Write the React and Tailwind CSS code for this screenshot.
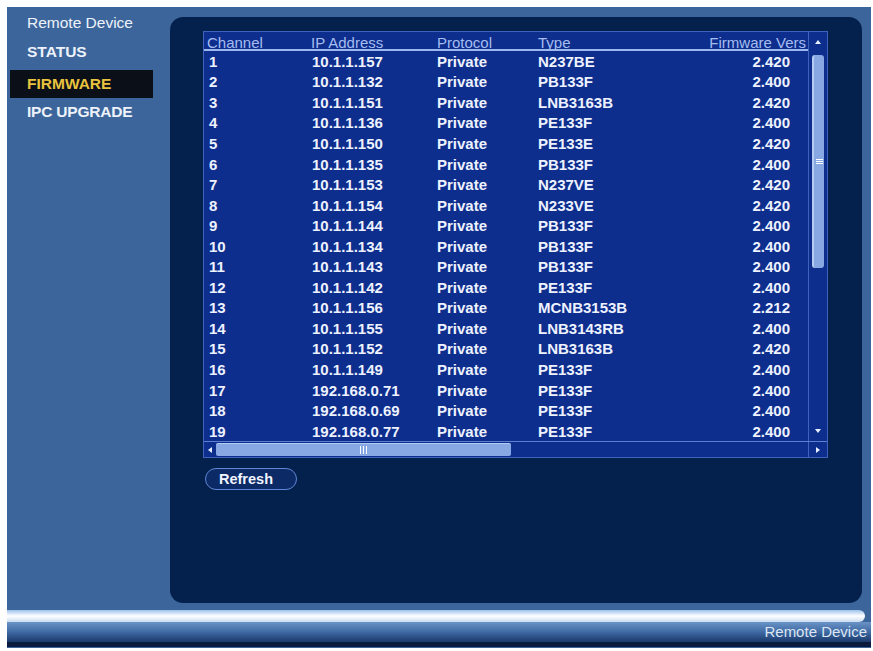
import React from "react";

const rows = [
  ["1", "10.1.1.157", "Private", "N237BE", "2.420"],
  ["2", "10.1.1.132", "Private", "PB133F", "2.400"],
  ["3", "10.1.1.151", "Private", "LNB3163B", "2.420"],
  ["4", "10.1.1.136", "Private", "PE133F", "2.400"],
  ["5", "10.1.1.150", "Private", "PE133E", "2.420"],
  ["6", "10.1.1.135", "Private", "PB133F", "2.400"],
  ["7", "10.1.1.153", "Private", "N237VE", "2.420"],
  ["8", "10.1.1.154", "Private", "N233VE", "2.420"],
  ["9", "10.1.1.144", "Private", "PB133F", "2.400"],
  ["10", "10.1.1.134", "Private", "PB133F", "2.400"],
  ["11", "10.1.1.143", "Private", "PB133F", "2.400"],
  ["12", "10.1.1.142", "Private", "PE133F", "2.400"],
  ["13", "10.1.1.156", "Private", "MCNB3153B", "2.212"],
  ["14", "10.1.1.155", "Private", "LNB3143RB", "2.400"],
  ["15", "10.1.1.152", "Private", "LNB3163B", "2.420"],
  ["16", "10.1.1.149", "Private", "PE133F", "2.400"],
  ["17", "192.168.0.71", "Private", "PE133F", "2.400"],
  ["18", "192.168.0.69", "Private", "PE133F", "2.400"],
  ["19", "192.168.0.77", "Private", "PE133F", "2.400"],
];

const cols = "grid grid-cols-[106px_127px_101px_113px_1fr]";

function Tri({ dir }) {
  const pts = {
    up: "1,6 4,2 7,6",
    down: "1,2 4,6 7,2",
    left: "6,1 2,4 6,7",
    right: "2,1 6,4 2,7",
  }[dir];
  return (
    <svg width="8" height="8" viewBox="0 0 8 8">
      <polygon points={pts} fill="#e8f0ff" />
    </svg>
  );
}

export default function App() {
  return (
    <div
      className="w-[873px] h-[651px] bg-white pt-[7px] pl-[7px] pr-[2px] pb-[3px] overflow-hidden"
      style={{ fontFamily: '"Liberation Sans", Arial, sans-serif' }}
    >
      <div className="h-full flex flex-col bg-[#3c669b]">
        {/* top area */}
        <div className="h-[596px] flex">
          {/* sidebar */}
          <div className="w-[163px] pt-[4px] flex flex-col text-[15.5px] text-[#eef2fa]">
            <div className="h-[24px] pl-[20px] flex items-center">Remote Device</div>
            <div className="h-[30px] mt-[2px] pl-[20px] flex items-center font-bold">STATUS</div>
            <div className="h-[28px] mt-[3px] ml-[3px] w-[143px] pl-[17px] flex items-center bg-[#0b0f18] text-[#e9c33e] font-bold">
              FIRMWARE
            </div>
            <div className="h-[28px] pl-[20px] flex items-center font-bold tracking-[-0.2px]">IPC UPGRADE</div>
          </div>

          {/* dark content panel */}
          <div className="mt-[10px] h-[586px] w-[692px] rounded-[13px] bg-[#04204d] pt-[14px] pl-[33px]">
            <div className="w-[625px] border border-[#3f62bd] bg-[#0d2e8d]">
              <div className="flex">
                {/* columns */}
                <div className="w-[604px]">
                  <div className={`${cols} h-[19px] items-center border-b-2 border-[#9cb6ee] text-[15px] text-[#a6bdf0]`}>
                    <div className="pl-[3px]">Channel</div>
                    <div className="pl-[1px]">IP Address</div>
                    <div>Protocol</div>
                    <div>Type</div>
                    <div className="text-right pr-[2px] whitespace-nowrap overflow-hidden">Firmware Vers</div>
                  </div>
                  {rows.map((r) => (
                    <div key={r[0]} className={`${cols} h-[20.55px] items-center text-[15px] font-bold text-[#eef2ff] leading-none`}>
                      <div className="pl-[5px]">{r[0]}</div>
                      <div className="pl-[2px]">{r[1]}</div>
                      <div>{r[2]}</div>
                      <div>{r[3]}</div>
                      <div className="text-right pr-[18px]">{r[4]}</div>
                    </div>
                  ))}
                </div>
                {/* vertical scrollbar */}
                <div className="w-[19px] border-l border-[#3f62bd] flex flex-col items-center">
                  <div className="h-[19px] flex items-center justify-center">
                    <Tri dir="up" />
                  </div>
                  <div className="flex-1 w-full flex flex-col items-center">
                    <div className="mt-[4px] h-[213px] w-[12px] rounded-[3px] bg-[#88a8e4] border-l-2 border-[#b4cbf2] flex items-center justify-center">
                      <div className="flex flex-col gap-[1px]">
                        <div className="w-[7px] h-[1px] bg-white" />
                        <div className="w-[7px] h-[1px] bg-white" />
                        <div className="w-[7px] h-[1px] bg-white" />
                      </div>
                    </div>
                    <div className="flex-1" />
                    <div className="h-[20px] flex items-center justify-center">
                      <Tri dir="down" />
                    </div>
                  </div>
                </div>
              </div>
              {/* horizontal scrollbar */}
              <div className="h-[16px] border-t border-[#5c7fd0] flex items-center">
                <div className="w-[12px] flex justify-center">
                  <Tri dir="left" />
                </div>
                <div className="w-[295px] h-[13px] rounded-[2px] bg-[#88a8e4] border-t border-[#b4cbf2] flex items-center justify-center">
                  <div className="flex gap-[2px]">
                    <div className="w-[1px] h-[8px] bg-white" />
                    <div className="w-[1px] h-[8px] bg-white" />
                    <div className="w-[1px] h-[8px] bg-white" />
                  </div>
                </div>
                <div className="flex-1" />
                <div className="w-[19px] border-l border-[#3f62bd] h-full flex items-center justify-center">
                  <Tri dir="right" />
                </div>
              </div>
            </div>
            <button className="mt-[10px] ml-[2px] w-[92px] h-[22px] rounded-full border-[1.5px] border-[#5f86d4] bg-[#0b2a66] text-[14.5px] font-bold text-[#f2f5ff] flex items-center pl-[13px]">
              Refresh
            </button>
          </div>
        </div>

        {/* bottom bar */}
        <div className="h-[45px] flex flex-col">
          <div className="h-[7px]" />
          <div className="h-[12px] mr-[6px] rounded-r-full bg-gradient-to-b from-[#9ec2ea] via-[#ffffff] to-[#c9dcf2]" />
          <div className="h-[20px] bg-gradient-to-b from-[#6a93c6] via-[#3f6aa3] to-[#1c3a6c] flex items-center justify-end pr-[4px]">
            <span className="text-[15px] text-[#dde6f2]">Remote Device</span>
          </div>
          <div className="flex-1 bg-[#0a1b3e] border-b border-[#3c669b]" />
        </div>
      </div>
    </div>
  );
}
